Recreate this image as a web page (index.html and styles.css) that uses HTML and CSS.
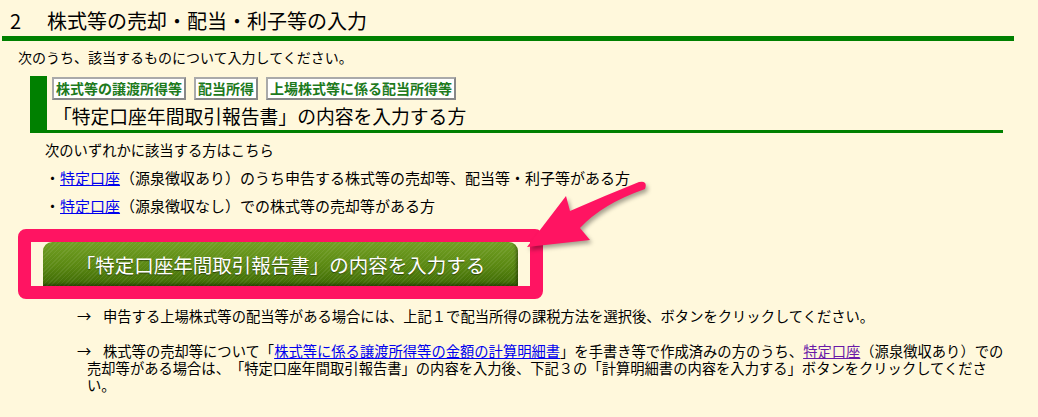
FILE: index.html
```html
<!DOCTYPE html>
<html lang="ja">
<head>
  <meta charset="UTF-8" />
  <meta name="viewport" content="width=device-width, initial-scale=1.0"/>
  <title>株式等の売却・配当・利子等の入力</title>
  <link rel="stylesheet" href="styles.css">
</head>
<body>

  <div class="page">
    <h2 class="section-title"><span class="num">2</span>株式等の売却・配当・利子等の入力</h2>

    <p class="intro">次のうち、該当するものについて入力してください。</p>

    <div class="subsection">
      <div class="tags">
        <span class="tag">株式等の譲渡所得等</span>
        <span class="tag">配当所得</span>
        <span class="tag">上場株式等に係る配当所得等</span>
      </div>
      <h3 class="sub-title">「特定口座年間取引報告書」の内容を入力する方</h3>
    </div>

    <div class="targets">
      <p class="lead">次のいずれかに該当する方はこちら</p>
      <p>・<a href="#">特定口座</a>（源泉徴収あり）のうち申告する株式等の売却等、配当等・利子等がある方</p>
      <p>・<a href="#">特定口座</a>（源泉徴収なし）での株式等の売却等がある方</p>
    </div>

    <div class="highlight">
      <button class="input-btn">「特定口座年間取引報告書」の内容を入力する</button>
    </div>

    <div class="notes">
      <p><span class="arrow">→</span>申告する上場株式等の配当等がある場合には、上記１で配当所得の課税方法を選択後、ボタンをクリックしてください。</p>
      <p><span class="arrow">→</span>株式等の売却等について「<a href="#">株式等に係る譲渡所得等の金額の計算明細書</a>」を手書き等で作成済みの方のうち、<a href="#" class="visited">特定口座</a>（源泉徴収あり）での売却等がある場合は、「特定口座年間取引報告書」の内容を入力後、下記３の「計算明細書の内容を入力する」ボタンをクリックしてください。</p>
    </div>
  </div>

  <!-- annotation arrow pointing at the button -->
  <svg class="callout" width="1038" height="417" viewBox="0 0 1038 417">
    <path d="M527 247 L566 196 L570 211 Q604 196 639 182 Q648 180 645 189 Q602 204 580 228 L590 240 Z" fill="#ff1462"/>
  </svg>

</body>
</html>
```

FILE: styles.css
```css
html, body {
  margin: 0;
  padding: 0;
  background-color: #fff8dc;
  color: #000;
  font-family: "Noto Sans CJK JP", "Noto Sans", sans-serif;
  text-spacing-trim: space-all;
}
body {
  position: relative;
}
p, h2, h3 {
  margin: 0;
  font-weight: normal;
}
a {
  color: #0000ee;
  text-decoration: underline;
}
a.visited {
  color: #6a1aa8;
}
.page {
  width: 1012px;
  margin-left: 2px;
}
.section-title {
  font-size: 20px;
  line-height: 26px;
  padding: 8px 0 2px 8px;
  border-bottom: 5px solid #008000;
}
.num {
  display: inline-block;
  width: 37px;
}
.intro {
  font-size: 14px;
  line-height: 20px;
  margin: 6px 0 0 16px;
}
.subsection {
  margin: 9px 11px 0 28px;
  padding: 1px 0 0 5px;
  border-left: 17px solid #008000;
  border-bottom: 3px solid #008000;
}
.tags {
  display: flex;
  gap: 8px;
}
.tag {
  background: #fff;
  color: #1d7a1d;
  font-size: 14px;
  font-weight: bold;
  line-height: 19px;
  padding: 0 2px;
  border: 2px solid;
  border-color: #aaa #888 #888 #aaa;
}
.sub-title {
  font-size: 18.8px;
  line-height: 28px;
  margin: 2px 0 0 1px;
}
.targets {
  margin: 3px 0 0 43px;
  font-size: 15px;
  line-height: 28px;
}
.targets .lead {
  font-size: 14.3px;
}
.highlight {
  box-sizing: border-box;
  width: 525px;
  height: 70px;
  margin: 9px 0 0 16px;
  padding: 0 12px;
  border: 13px solid #ff1462;
  border-radius: 8px;
}
.input-btn {
  display: block;
  width: 100%;
  height: 44px;
  border: none;
  border-radius: 9px 9px 0 0;
  color: #fff;
  font-family: inherit;
  font-size: 19.5px;
  text-shadow: 0 1px 1px rgba(0, 0, 0, 0.45);
  background:
    repeating-linear-gradient(135deg, rgba(255, 255, 255, 0.07) 0 1px, transparent 1px 3px),
    linear-gradient(#72a024, #5a8812 55%, #3c6804);
  box-shadow: inset -2px -2px 3px rgba(0, 0, 0, 0.35);
  cursor: pointer;
}
.notes {
  margin: 8px 6px 0 85px;
  font-size: 14.3px;
  line-height: 17px;
}
.notes p {
  text-indent: -10px;
  margin-bottom: 18px;
}
.notes a {
  display: inline-block;
  text-indent: 0;
}
.arrow {
  display: inline-block;
  width: 26px;
  text-indent: 0;
}
.callout {
  position: absolute;
  top: 0;
  left: 0;
  pointer-events: none;
  filter: drop-shadow(2px 3px 2px rgba(0, 0, 0, 0.35));
}
```
